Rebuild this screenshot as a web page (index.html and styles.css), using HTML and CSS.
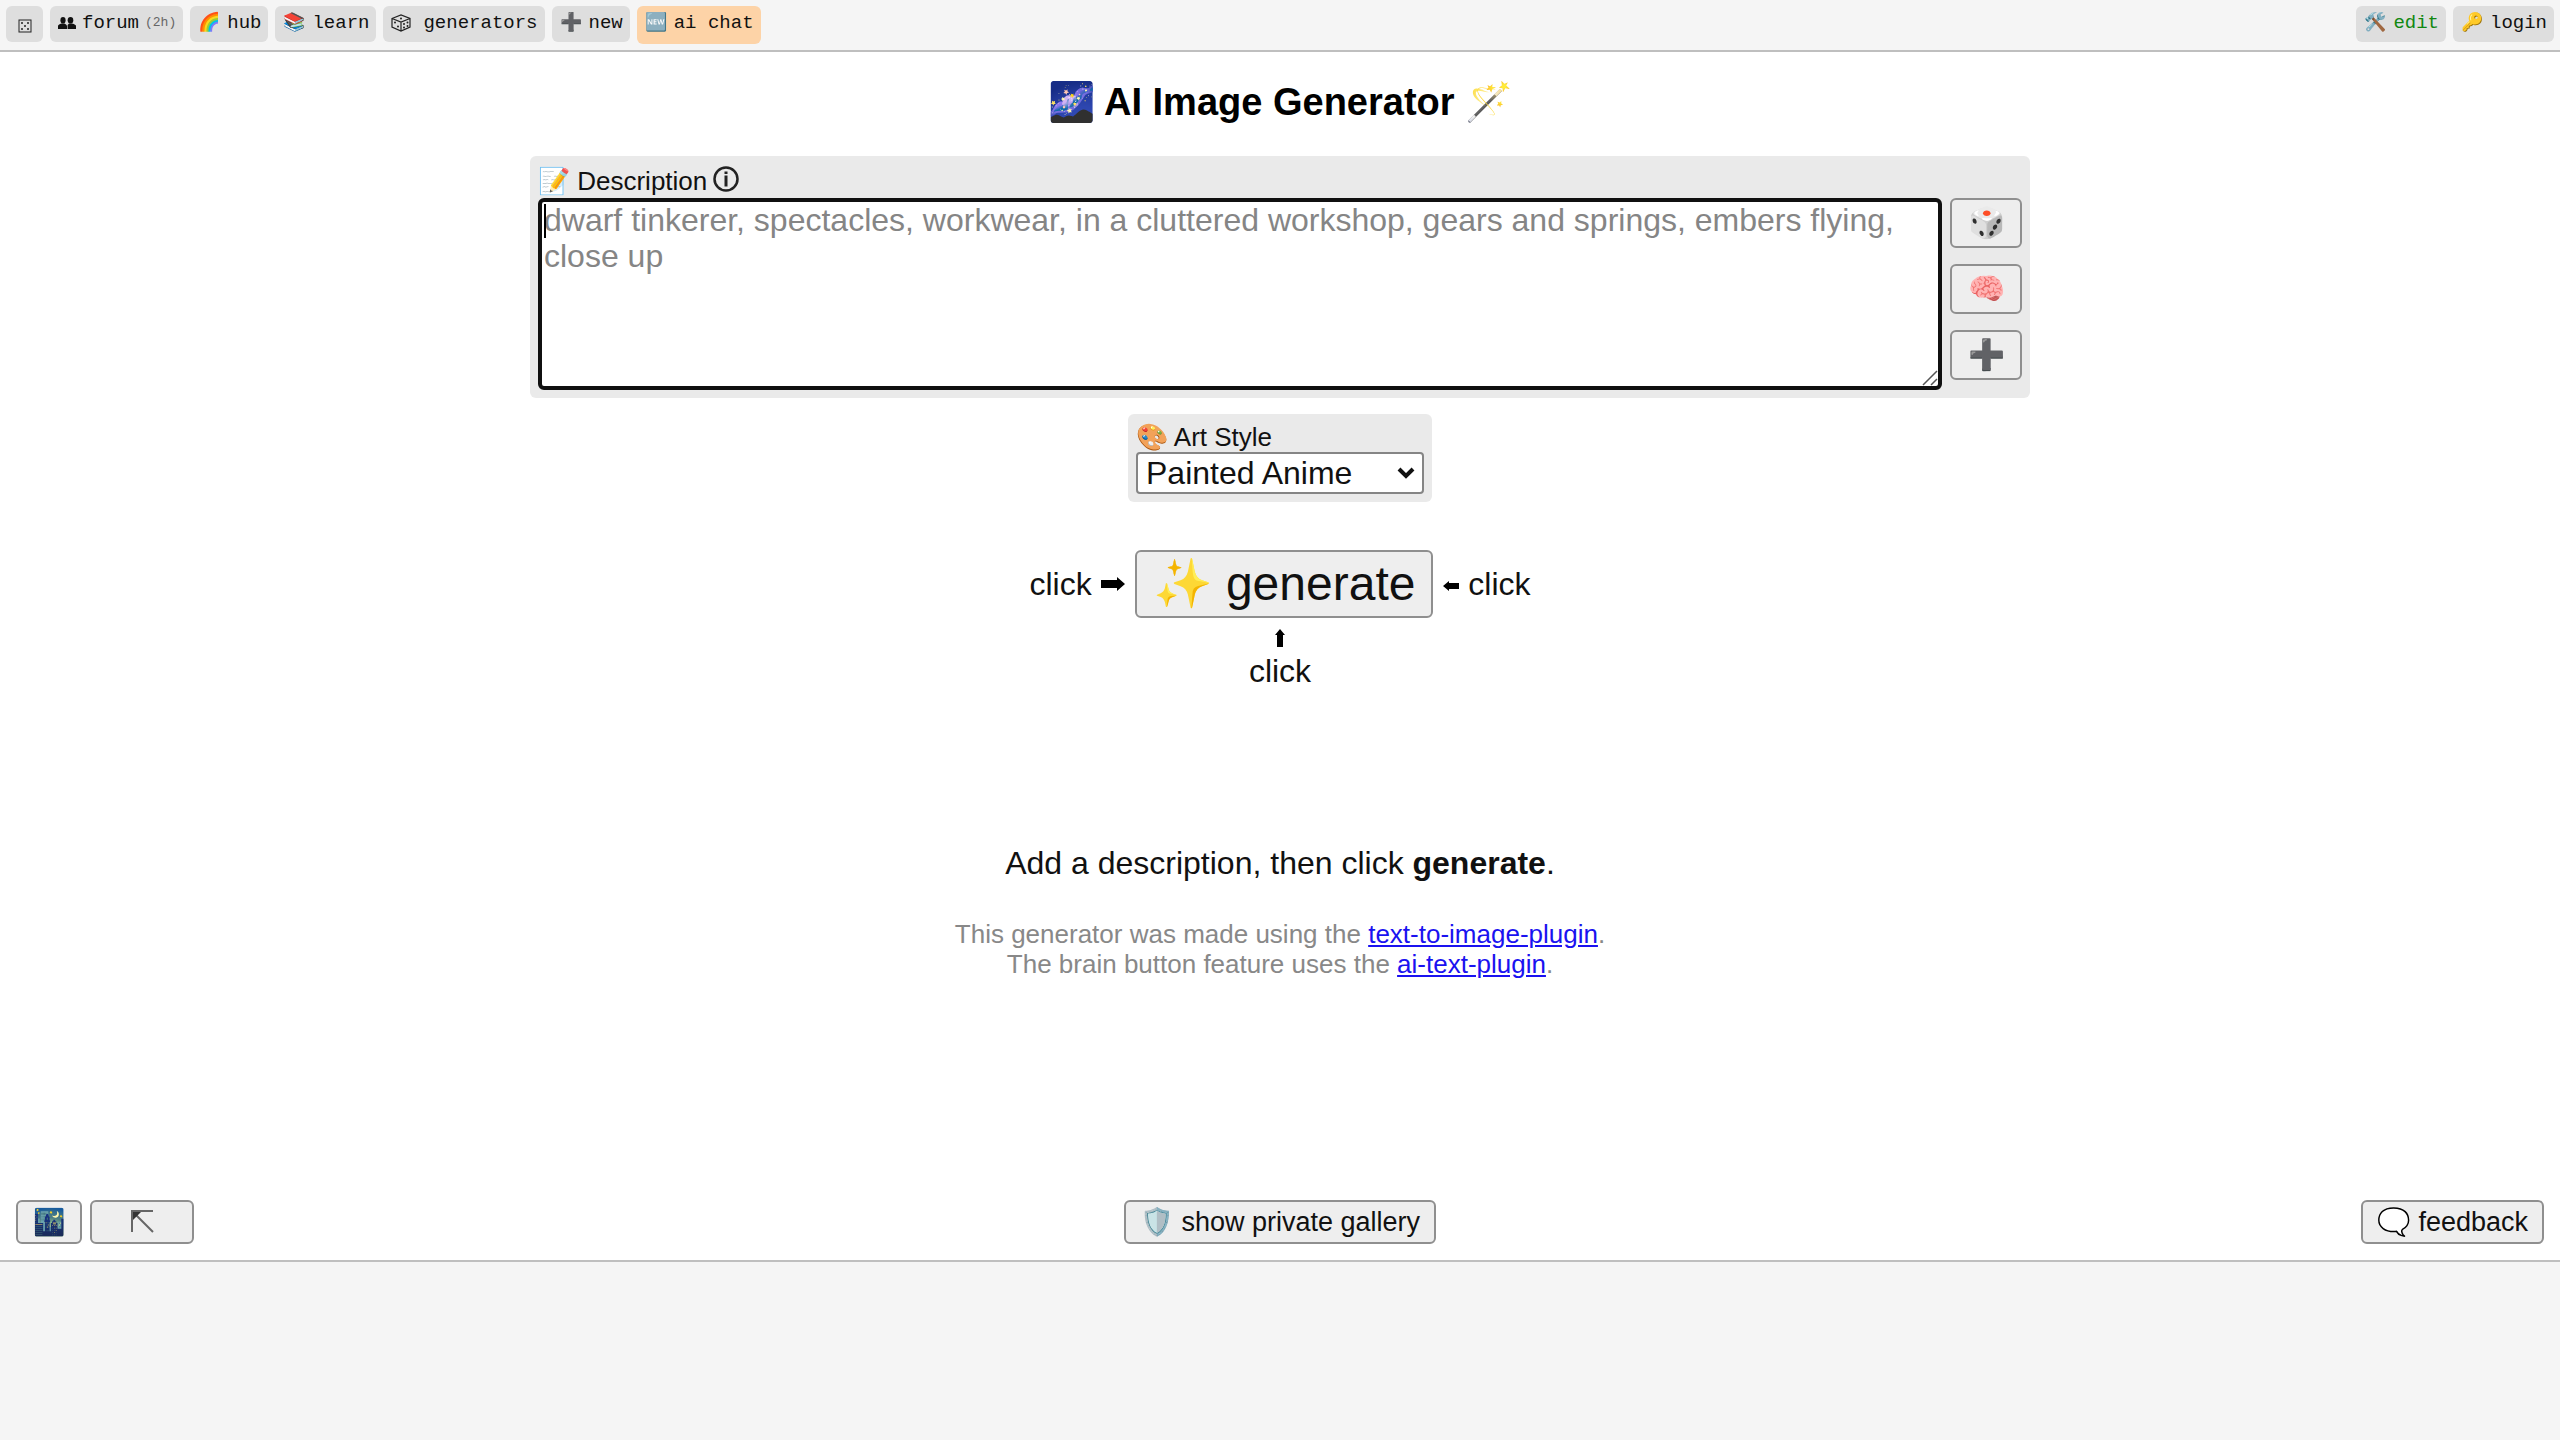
FILE: index.html
```html
<!DOCTYPE html>
<html lang="en">
<head>
<meta charset="utf-8">
<title>AI Image Generator</title>
<link rel="stylesheet" href="styles.css">
</head>
<body>
<header class="topbar">
  <nav class="menu" aria-label="Site">
    <a class="tab tab-die" href="#" aria-label="random"><svg class="die" viewBox="0 0 14 14"><rect x="1" y="1" width="12" height="12" fill="none" stroke="#222"/><g fill="#222"><circle cx="4" cy="4" r="1"/><circle cx="10" cy="4" r="1"/><circle cx="7" cy="7" r="1"/><circle cx="4" cy="10" r="1"/><circle cx="10" cy="10" r="1"/></g></svg></a>
    <a class="tab" href="#"><svg class="people" viewBox="0 0 18 12"><g fill="#111"><ellipse cx="5" cy="3.2" rx="2.6" ry="3.2"/><path d="M0 12V9Q0 7.5 3.5 6.5H6.500Q9 7.500 9 9V12z"/><ellipse cx="12.500" cy="3.200" rx="2.800" ry="3.200"/><path d="M9.600 12V9.500Q9 8 11 6.500H14Q18 7.500 18 9V12z"/></g></svg>forum<small class="ago">(2h)</small></a>
    <a class="tab" href="#"><span class="emoji">🌈</span>hub</a>
    <a class="tab" href="#"><span class="emoji">📚</span>learn</a>
    <a class="tab tab-generators" href="#"><svg class="cube" viewBox="0 0 20 18"><path d="M1 4.500 10 1l9 3.500V13l-9 4-9-4zM1 4.500l9 3.500 9-3.500M10 8v9" fill="none" stroke="#222" stroke-width="1.200"/><g fill="#222"><circle cx="10" cy="4.500" r="1"/><circle cx="4" cy="8.500" r="1"/><circle cx="7" cy="12.500" r="1"/><circle cx="13" cy="10" r="1"/><circle cx="16.500" cy="8.500" r="1"/><circle cx="13" cy="13.500" r="1"/><circle cx="16.500" cy="12" r="1"/></g></svg>generators</a>
    <a class="tab" href="#"><span class="emoji">➕</span>new</a>
    <a class="tab tab-new" href="#"><span class="emoji">🆕</span>ai chat</a>
  </nav>
  <nav class="menu" aria-label="Account">
    <a class="tab tab-edit" href="#"><span class="emoji">🛠️</span>edit</a>
    <a class="tab" href="#"><span class="emoji">🔑</span>login</a>
  </nav>
</header>
<main class="app">
  <h1 class="title">🌌 AI Image Generator 🪄</h1>
  <section class="card prompt">
    <label class="label" for="description">📝 Description<svg class="info" viewBox="0 0 26 26"><circle cx="13" cy="13" r="11.500" fill="none" stroke="#222" stroke-width="2.500"/><path d="M13 5.500V8M13 9.500V20.500" stroke="#222" stroke-width="3"/></svg></label>
    <div class="prompt-row">
      <div class="field">
        <textarea class="description" id="description" placeholder="dwarf tinkerer, spectacles, workwear, in a cluttered workshop, gears and springs, embers flying, close up"></textarea>
        <span class="caret"></span>
        <svg class="grip" viewBox="0 0 16 16"><path d="M1 15 15 1M9 15l6-6" stroke="#555" stroke-width="1.500"/></svg>
      </div>
      <div class="tools">
        <button class="button tool" aria-label="random">🎲</button>
        <button class="button tool" aria-label="brain">🧠</button>
        <button class="button tool" aria-label="add">➕</button>
      </div>
    </div>
  </section>
  <section class="card style">
    <label class="label label-tight" for="style">🎨 Art Style</label>
    <div class="field">
      <select class="select" id="style"><option>Painted Anime</option></select>
      <svg class="chevron" viewBox="0 0 18 12"><path d="M2 2l7 7 7-7" fill="none" stroke="#111" stroke-width="4"/></svg>
    </div>
  </section>
  <div class="action">
    <span class="hint">click <svg class="arrow-right" viewBox="0 0 24 14"><path d="M0 3h16V0l8 7-8 7v-3H0z"/></svg></span>
    <button class="button generate">✨ generate</button>
    <span class="hint"><svg class="arrow-left" viewBox="0 0 16 10"><path d="M16 2H6V0L0 5l6 5V8h10z"/></svg> click</span>
  </div>
  <div class="below"><svg class="arrow-up" viewBox="0 0 10 18"><path d="M2 18V6H0l5-6 5 6H8v12z"/></svg><span>click</span></div>
  <p class="lead">Add a description, then click <b>generate</b>.</p>
  <p class="note">This generator was made using the <a href="#">text-to-image-plugin</a>.<br>The brain button feature uses the <a href="#">ai-text-plugin</a>.</p>
  <footer class="bottom">
    <div class="group">
      <button class="button night" aria-label="night mode">🌃</button>
      <button class="button corner" aria-label="expand"><svg class="corner-icon" viewBox="0 0 24 24"><path d="M2 23V2h21M5 5l18 18" fill="none" stroke="#666" stroke-width="2"/><path d="M3 3h8l-8 8z" fill="#333"/></svg></button>
    </div>
    <button class="button wide">🛡️ show private gallery</button>
    <div class="group group-end"><button class="button wide">🗨️ feedback</button></div>
  </footer>
</main>
<aside class="banner"></aside>
</body>
</html>
```
FILE: styles.css
```css
* { box-sizing: border-box; }
body {
  margin: 0;
  min-height: 100vh;
  display: flex;
  flex-direction: column;
  color: #111;
  background: #fff;
  font: 32px/36px "Liberation Sans", Arial, sans-serif;
}
button, select, textarea { font: inherit; color: inherit; }

.topbar {
  display: flex;
  justify-content: space-between;
  height: 52px;
  padding: 6px;
  background: #f5f5f5;
  border-bottom: 2px solid #bfbfbf;
  font: 19px/32px "Liberation Mono", "Courier New", monospace;
}
.menu { display: flex; align-items: flex-start; gap: 7px; }
.tab {
  display: flex;
  align-items: center;
  gap: 6px;
  height: 36px;
  padding: 0 7px 2px 8px;
  border-radius: 6px;
  background: #dedede;
  color: #111;
  text-decoration: none;
}
.emoji { width: 23px; font-size: 18px; }
.tab-die { width: 37px; padding: 4px 0 0 12px; }
.tab-generators { gap: 12px; }
.tab-new { height: 38px; padding-bottom: 4px; background: #fdd3a7; }
.tab-edit { color: #118811; }
.ago { color: #666; font-size: 13px; }
.die { width: 14px; height: 14px; }
.people { width: 18px; height: 12px; }
.cube { width: 20px; height: 18px; }

.app { flex: 1; display: flex; flex-direction: column; align-items: center; }
.title { margin: 28px 0 32px; font-size: 38px; line-height: 44px; color: #000; }
.card { padding: 8px; border-radius: 6px; background: #eaeaea; }
.label { display: block; height: 34px; font-size: 26px; line-height: 34px; }
.label-tight { height: 30px; line-height: 30px; }
.prompt { width: calc(100% - 32px); max-width: 1500px; margin-bottom: 16px; }
.info { width: 26px; height: 26px; margin-left: 6px; vertical-align: -2px; }
.prompt-row { display: flex; gap: 8px; }
.field { position: relative; display: flex; }
.prompt .field { flex: 1; }
.description {
  flex: 1;
  height: 192px;
  padding: 0 2px;
  border: 4px solid #101010;
  border-radius: 6px;
  outline: 0;
  background: #fff;
  resize: none;
}
.description::placeholder { color: #858585; }
.caret { position: absolute; left: 6px; top: 6px; width: 2px; height: 34px; background: #000; }
.grip { position: absolute; right: 4px; bottom: 4px; width: 16px; height: 16px; }
.tools { display: flex; flex-direction: column; gap: 16px; }
.button {
  padding: 0 14px;
  border: 2px solid #8f8f8f;
  border-radius: 6px;
  background: #eee;
}
.tool { width: 72px; height: 50px; padding: 0; font-size: 30px; }
.style { margin-bottom: 48px; }
.select {
  appearance: none;
  width: 288px;
  height: 42px;
  padding: 0 8px;
  border: 2px solid #858585;
  border-radius: 4px;
  background: #fff;
}
.chevron { position: absolute; right: 9px; top: 15px; width: 18px; height: 12px; }

.action { display: flex; align-items: center; gap: 10px; }
.generate { height: 68px; padding: 0 16px; font-size: 48px; }
.arrow-right { width: 24px; height: 14px; vertical-align: 4px; }
.arrow-left { width: 16px; height: 10px; vertical-align: 4px; }
.below { display: flex; flex-direction: column; align-items: center; gap: 6px; margin-top: 11px; }
.arrow-up { width: 10px; height: 18px; }
.lead { margin: 156px 0 38px; }
.note { margin: 0; font-size: 26px; line-height: 30px; color: #888; text-align: center; }
.note a { color: #1a12f0; }

.bottom {
  width: 100%;
  margin-top: auto;
  padding: 0 16px 16px;
  display: grid;
  grid-template-columns: 1fr auto 1fr;
  align-items: end;
}
.group { display: flex; gap: 8px; }
.group-end { justify-content: flex-end; }
.night { width: 66px; height: 44px; padding: 0; font-size: 26px; }
.corner { width: 104px; height: 44px; padding: 0; }
.corner-icon { width: 24px; height: 24px; }
.wide { height: 44px; font-size: 27px; }
.banner { height: 180px; border-top: 2px solid #bfbfbf; background: #f5f5f5; }
```
